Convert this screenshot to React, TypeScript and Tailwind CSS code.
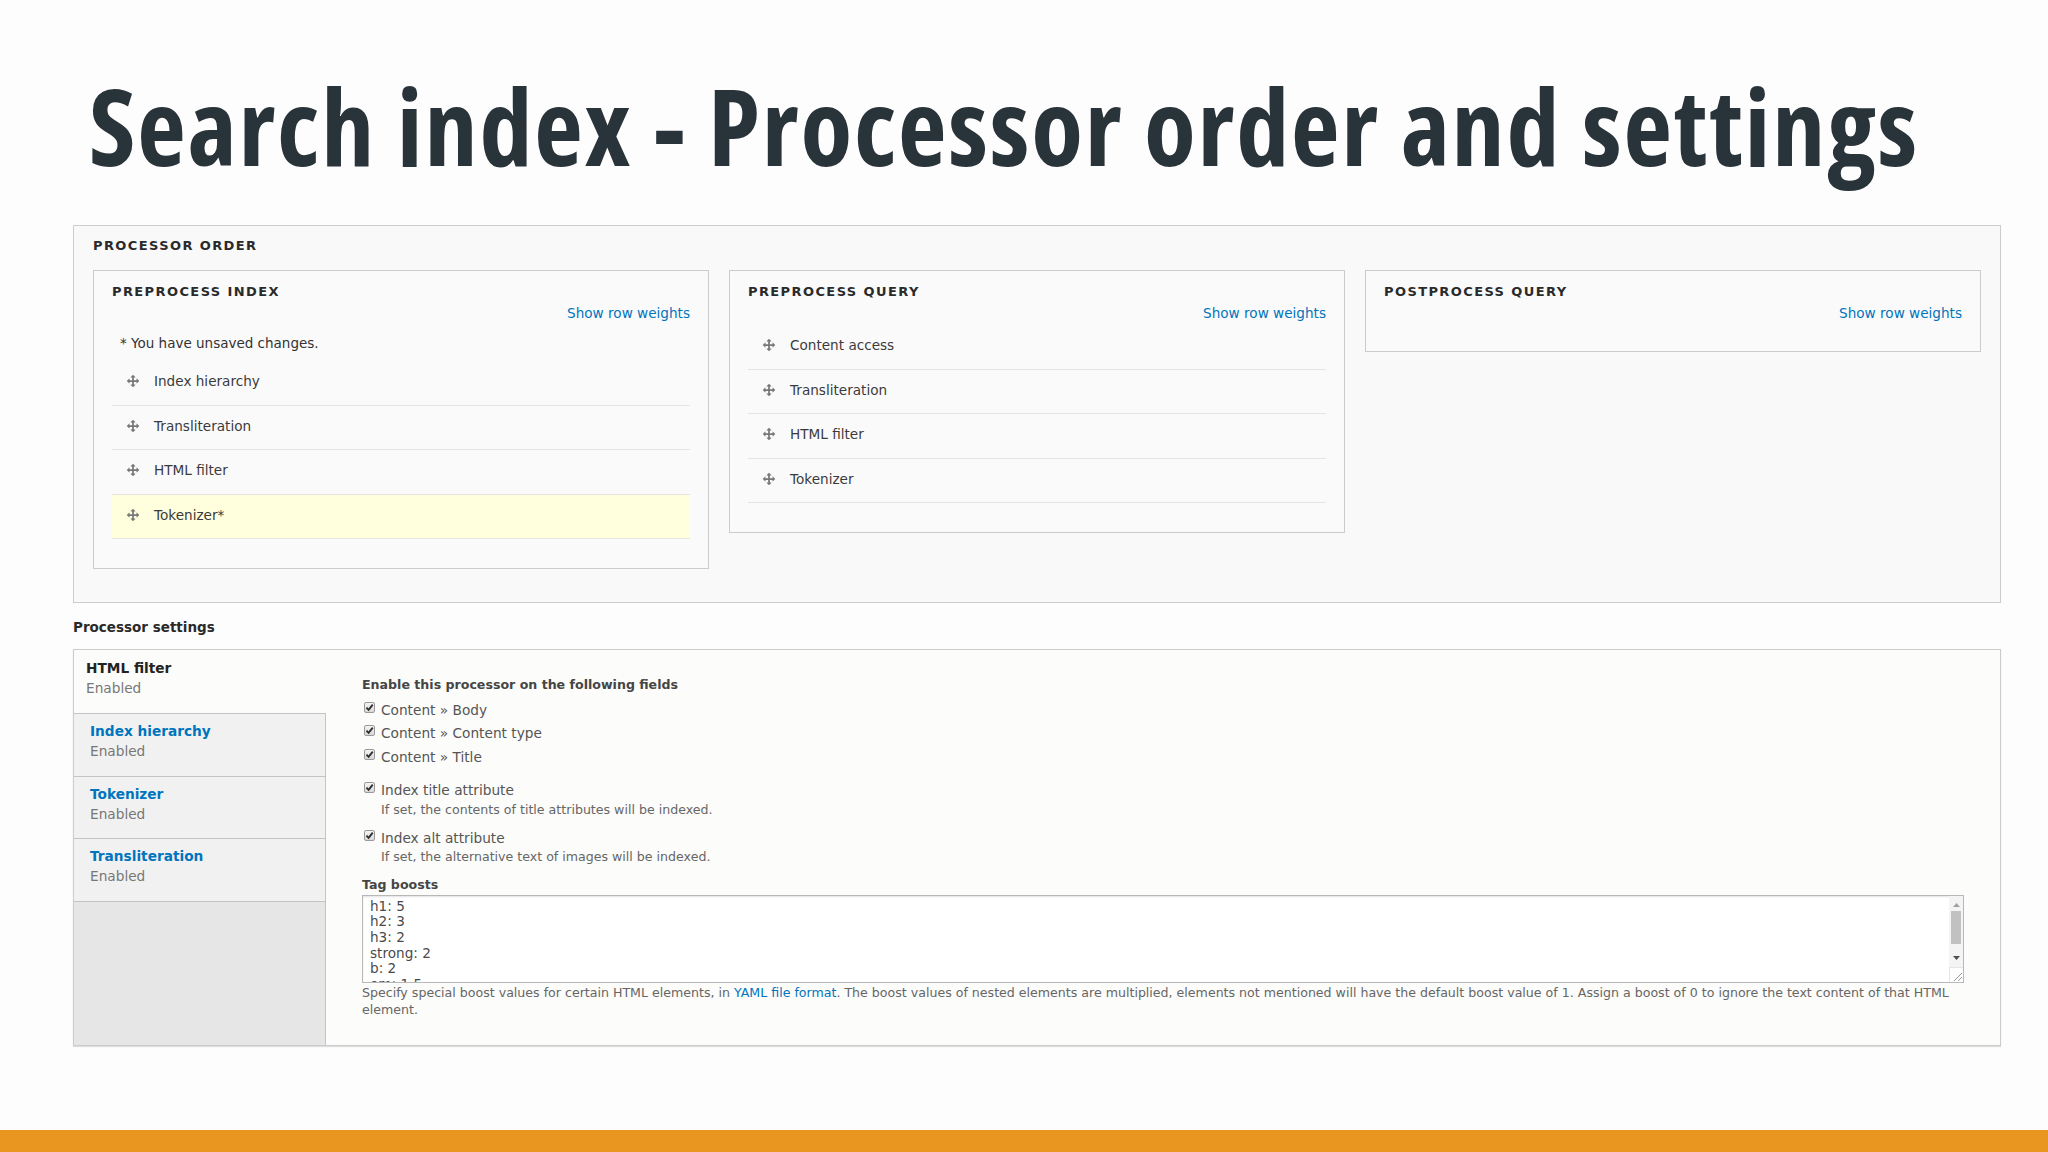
import React from 'react';

const DragIcon = () => (
  <svg width="14" height="14" viewBox="0 0 16 16" className="shrink-0">
    <path
      fill="#787878"
      d="M14.904 7.753l-2.373-2.372c-.291-.292-.529-.193-.529.22v1.399h-3v-3h1.398c.414 0 .512-.239.221-.53l-2.371-2.372c-.137-.136-.36-.136-.497 0l-2.372 2.372c-.292.292-.193.53.22.53h1.399v3h-3v-1.369c0-.413-.239-.511-.53-.22l-2.372 2.372c-.136.136-.136.359 0 .494l2.372 2.372c.291.292.53.192.53-.219v-1.43h3v3h-1.4c-.413 0-.511.238-.22.529l2.374 2.373c.137.137.36.137.495 0l2.373-2.373c.29-.291.19-.529-.222-.529h-1.398v-3h3v1.4c0 .412.238.511.529.219l2.373-2.371c.137-.137.137-.359 0-.495z"
    />
  </svg>
);

const Check = () => (
  <span className="flex h-[11px] w-[11px] shrink-0 items-center justify-center rounded-[2px] border border-[#9a9a9a] bg-gradient-to-b from-[#f4f4f4] to-[#d8d8d8]">
    <svg width="9" height="9" viewBox="0 0 10 10">
      <path d="M1.6 5.2 L4 7.6 L8.6 1.8" fill="none" stroke="#2e2e2e" strokeWidth="2" />
    </svg>
  </span>
);

interface Row { label: string; changed?: boolean }

const OrderBox = ({ title, rows, unsaved }: { title: string; rows: Row[]; unsaved?: boolean }) => (
  <div className="w-[616px] border border-[#cccccc] bg-[#fafafa] px-[18px] pt-[13px] pb-[29px]">
    <div className="text-[13px] font-bold uppercase leading-[16px] tracking-[1.4px] text-[#2a2a2a]">{title}</div>
    <div className="mt-[4px] flex justify-end text-[13.6px] leading-[18px] text-[#0074bd]">Show row weights</div>
    {unsaved && (
      <div className="mt-[12px] pl-[8px] text-[13.5px] leading-[18px] text-[#333]">* You have unsaved changes.</div>
    )}
    {rows.length > 0 && (
      <div className={unsaved ? 'mt-[9px]' : 'mt-[3px]'}>
        {rows.map((r) => (
          <div
            key={r.label}
            className={`flex h-[44.5px] items-center border-b border-[#e6e4df] pb-[3px] pl-[14px] ${r.changed ? 'bg-[#ffffdd]' : ''}`}
          >
            <DragIcon />
            <span className="ml-[14px] text-[13.6px] leading-[18px] text-[#3a3a3a]">{r.label}{r.changed ? '*' : ''}</span>
          </div>
        ))}
      </div>
    )}
  </div>
);

const tabs = [
  { title: 'Index hierarchy' },
  { title: 'Tokenizer' },
  { title: 'Transliteration' },
];

const boosts = ['h1: 5', 'h2: 3', 'h3: 2', 'strong: 2', 'b: 2', 'em: 1.5', 'u: 1.5'];

export default function App() {
  return (
    <div className="flex h-[1152px] w-[2048px] flex-col overflow-hidden bg-[#fdfdfd] font-['DejaVu_Sans',sans-serif]">
      <h1 className="whitespace-nowrap pl-[89px] pt-[72px] font-['Open_Sans',sans-serif] text-[106px] font-bold leading-none tracking-[1.8px] text-[#29333a] [font-stretch:75%]">
        Search index - Processor order and settings
      </h1>

      <div className="ml-[73px] mt-[47px] w-[1928px]">
        {/* Processor order */}
        <div className="h-[378px] border border-[#cccccc] bg-[#f9f9f9] px-[19px] pt-[12px]">
          <div className="text-[13px] font-bold uppercase leading-[16px] tracking-[1.4px] text-[#2a2a2a]">Processor order</div>
          <div className="mt-[16px] flex items-start gap-[20px]">
            <OrderBox
              title="Preprocess index"
              unsaved
              rows={[
                { label: 'Index hierarchy' },
                { label: 'Transliteration' },
                { label: 'HTML filter' },
                { label: 'Tokenizer', changed: true },
              ]}
            />
            <OrderBox
              title="Preprocess query"
              rows={[
                { label: 'Content access' },
                { label: 'Transliteration' },
                { label: 'HTML filter' },
                { label: 'Tokenizer' },
              ]}
            />
            <OrderBox title="Postprocess query" rows={[]} />
          </div>
        </div>

        {/* Processor settings */}
        <div className="mt-[15px] text-[13.5px] font-bold leading-[18px] text-[#2a2a2a]">Processor settings</div>
        <div className="mt-[13px] flex h-[397px] border border-[#cccccc] bg-[#fcfcfa] shadow-[0_1px_1px_rgba(0,0,0,0.12)]">
          <div className="flex w-[252px] shrink-0 flex-col bg-[#e6e6e6]">
            <div className="h-[63px] bg-[#fcfcfa] pl-[12px] pt-[8px]">
              <div className="text-[13.7px] font-bold leading-[20px] text-[#222]">HTML filter</div>
              <div className="text-[13.7px] leading-[20px] text-[#777]">Enabled</div>
            </div>
            {tabs.map((t) => (
              <div key={t.title} className="h-[62.5px] border-t border-r border-[#c4c4c4] bg-[#f1f1f1] pl-[16px] pt-[7px]">
                <div className="text-[13.7px] font-bold leading-[20px] text-[#0074bd]">{t.title}</div>
                <div className="text-[13.7px] leading-[20px] text-[#777]">Enabled</div>
              </div>
            ))}
            <div className="flex-1 border-t border-r border-[#c4c4c4]" />
          </div>

          <div className="flex-1 px-[36px] pt-[26px]">
            <div className="text-[12.6px] font-bold leading-[18px] text-[#454545]">Enable this processor on the following fields</div>
            <div className="mt-[4px]">
              {['Content » Body', 'Content » Content type', 'Content » Title'].map((f) => (
                <div key={f} className="flex h-[23.5px] items-center pl-[2px]">
                  <span className="-mt-[5px]"><Check /></span>
                  <span className="ml-[6px] text-[13.7px] leading-[18px] text-[#555]">{f}</span>
                </div>
              ))}
            </div>

            <div className="mt-[11px]">
              <div className="flex h-[20px] items-center pl-[2px]">
                <span className="-mt-[5px]"><Check /></span>
                <span className="ml-[6px] text-[13.7px] leading-[18px] text-[#555]">Index title attribute</span>
              </div>
              <div className="pl-[19px] text-[12.6px] leading-[20px] text-[#666]">If set, the contents of title attributes will be indexed.</div>
            </div>
            <div className="mt-[8px]">
              <div className="flex h-[20px] items-center pl-[2px]">
                <span className="-mt-[5px]"><Check /></span>
                <span className="ml-[6px] text-[13.7px] leading-[18px] text-[#555]">Index alt attribute</span>
              </div>
              <div className="pl-[19px] text-[12.6px] leading-[18px] text-[#666]">If set, the alternative text of images will be indexed.</div>
            </div>

            <div className="mt-[10px] text-[12.6px] font-bold leading-[18px] text-[#454545]">Tag boosts</div>
            <div className="relative mt-[1px]">
              <textarea
                readOnly
                value={boosts.join('\n')}
                className="block h-[88px] w-full resize-none overflow-hidden border border-[#b8b8b8] bg-white pl-[7px] pt-[3px] font-['DejaVu_Sans',sans-serif] text-[13.6px] leading-[15.7px] text-[#4a4a4a] shadow-[inset_0_1px_2px_rgba(0,0,0,0.12)] outline-none"
              />
              {/* scrollbar */}
              <div className="absolute right-[1px] top-[1px] flex h-[71px] w-[14px] flex-col items-center bg-[#f4f4f4]">
                <svg width="7" height="4" viewBox="0 0 7 4" className="mt-[7px]"><path d="M3.5 0 L7 4 L0 4 Z" fill="#a0a0a0" /></svg>
                <div className="mt-[4px] h-[33px] w-[10px] bg-[#c1c1c1]" />
                <svg width="7" height="4" viewBox="0 0 7 4" className="mt-[12px]"><path d="M0 0 L7 0 L3.5 4 Z" fill="#505050" /></svg>
              </div>
              <div className="absolute bottom-[1px] right-[1px] h-[15px] w-[14px] border-l border-t border-[#e4e4e4] bg-white">
                <svg width="13" height="14" viewBox="0 0 13 14">
                  <path d="M12 5 L4 13 M12 9 L8 13" stroke="#9a9a9a" strokeWidth="1" />
                </svg>
              </div>
            </div>
            <div className="mt-[1px] text-[12.6px] leading-[17px] text-[#666]">
              <div className="whitespace-nowrap">
                <span>Specify special boost values for certain HTML elements, in </span>
                <span className="text-[#0074bd]">YAML file format</span>
                <span>. The boost values of nested elements are multiplied, elements not mentioned will have the default boost value of 1. Assign a boost of 0 to ignore the text content of that HTML</span>
              </div>
              <div>element.</div>
            </div>
          </div>
        </div>
      </div>

      <div className="mt-auto h-[22px] bg-[#e8961f]" />
    </div>
  );
}
